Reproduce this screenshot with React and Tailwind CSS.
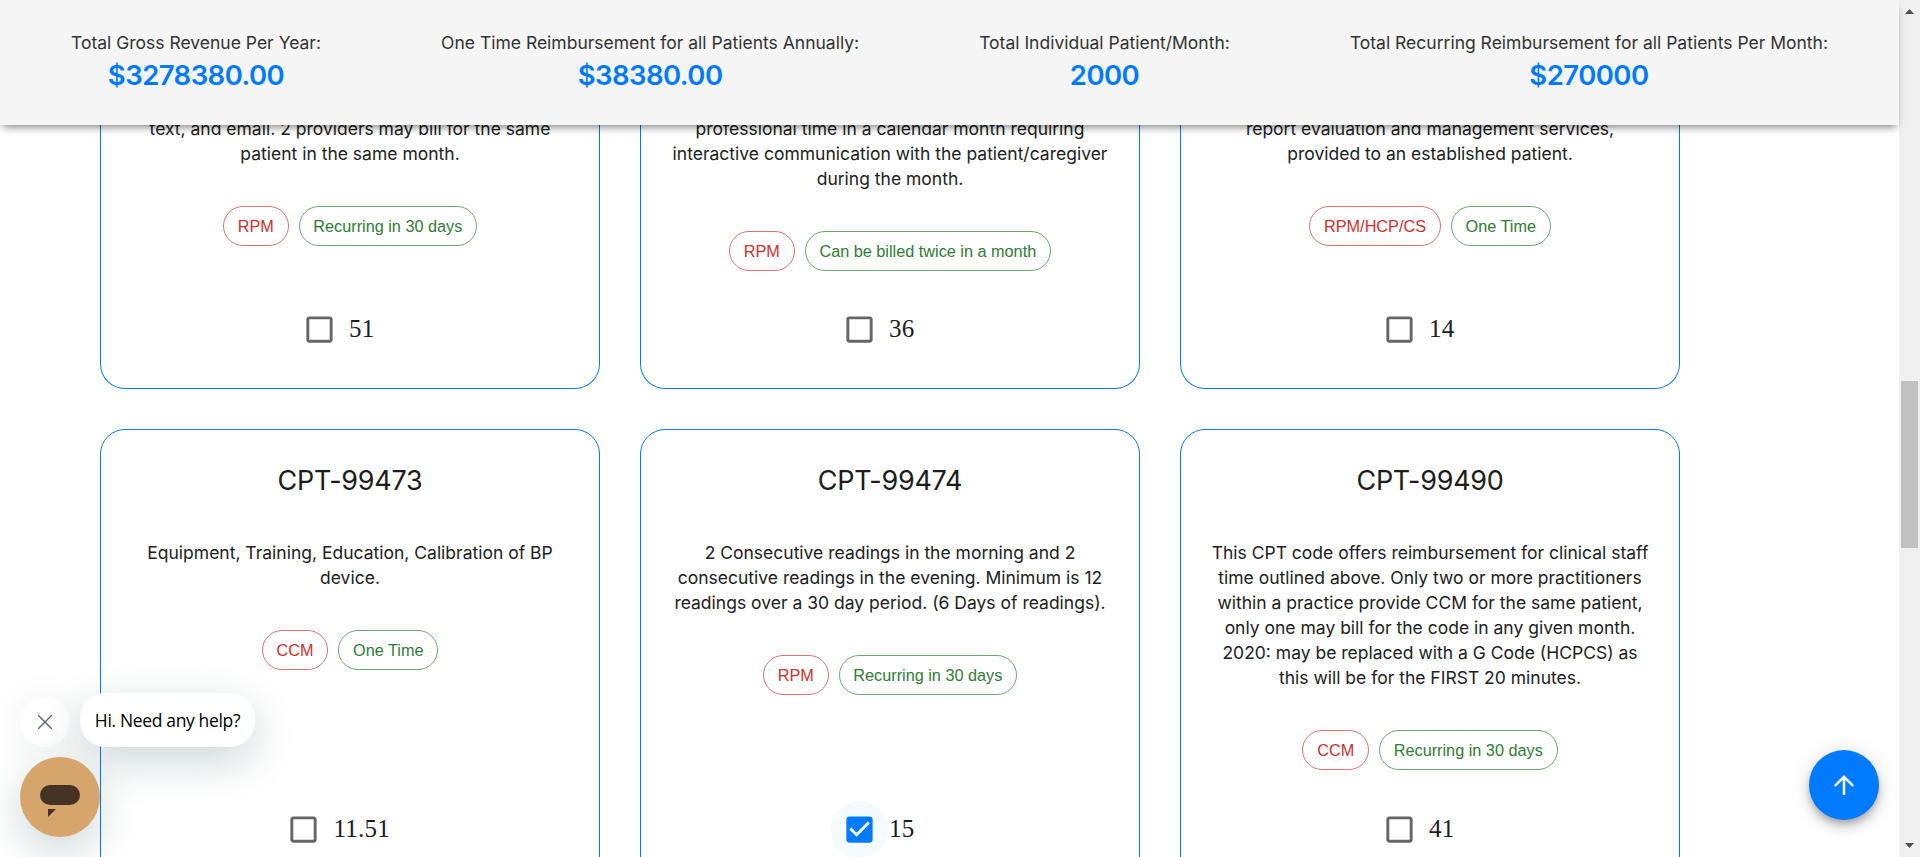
const stats = [
  { label: 'Total Gross Revenue Per Year:', value: '$3278380.00' },
  { label: 'One Time Reimbursement for all Patients Annually:', value: '$38380.00' },
  { label: 'Total Individual Patient/Month:', value: '2000' },
  { label: 'Total Recurring Reimbursement for all Patients Per Month:', value: '$270000' },
];

const upperCards = [
  {
    lines: ['text, and email. 2 providers may bill for the same', 'patient in the same month.'],
    program: 'RPM',
    billing: 'Recurring in 30 days',
    amount: '51',
  },
  {
    lines: [
      'professional time in a calendar month requiring',
      'interactive communication with the patient/caregiver',
      'during the month.',
    ],
    program: 'RPM',
    billing: 'Can be billed twice in a month',
    amount: '36',
  },
  {
    lines: ['report evaluation and management services,', 'provided to an established patient.'],
    program: 'RPM/HCP/CS',
    billing: 'One Time',
    amount: '14',
  },
];

const lowerCards = [
  {
    title: 'CPT-99473',
    lines: ['Equipment, Training, Education, Calibration of BP', 'device.'],
    program: 'CCM',
    billing: 'One Time',
    amount: '11.51',
  },
  {
    title: 'CPT-99474',
    lines: [
      '2 Consecutive readings in the morning and 2',
      'consecutive readings in the evening. Minimum is 12',
      'readings over a 30 day period. (6 Days of readings).',
    ],
    program: 'RPM',
    billing: 'Recurring in 30 days',
    amount: '15',
    checked: true,
  },
  {
    title: 'CPT-99490',
    lines: [
      'This CPT code offers reimbursement for clinical staff',
      'time outlined above. Only two or more practitioners',
      'within a practice provide CCM for the same patient,',
      'only one may bill for the code in any given month.',
      '2020: may be replaced with a G Code (HCPCS) as',
      'this will be for the FIRST 20 minutes.',
    ],
    program: 'CCM',
    billing: 'Recurring in 30 days',
    amount: '41',
  },
];

function Header() {
  return (
    <header className="relative z-10 flex h-[125px] shrink-0 justify-between bg-[#f5f5f5] px-[71px] pt-[30px] shadow-[0_5px_8px_-3px_rgba(0,0,0,0.5)]">
      {stats.map((s) => (
        <div key={s.label} className="flex flex-col items-center">
          <div className="text-[17.5px] leading-[25px] whitespace-nowrap text-[#333333]">{s.label}</div>
          <div className="text-[27.5px] leading-[40px] font-semibold tracking-[-0.55px] text-[#007bff]">{s.value}</div>
        </div>
      ))}
    </header>
  );
}

function Chip({ label, color }) {
  return (
    <span
      className={
        'flex h-10 items-center rounded-[20px] border px-[13.75px] font-["Liberation_Sans",Arial,sans-serif] text-[16.25px] whitespace-nowrap ' +
        color
      }
    >
      {label}
    </span>
  );
}

function Checkbox({ checked }) {
  return (
    <span
      className={
        '-ml-[15px] mr-px flex size-[57.5px] items-center justify-center rounded-full ' +
        (checked ? 'bg-[#f5faff] text-[#007bff]' : 'text-[#666666]')
      }
    >
      <svg className="size-[35px]" viewBox="0 0 24 24" fill="currentColor">
        {checked ? (
          <path d="M19 3H5c-1.11 0-2 .9-2 2v14c0 1.1.89 2 2 2h14c1.11 0 2-.9 2-2V5c0-1.1-.89-2-2-2zm-9 14l-5-5 1.41-1.41L10 14.17l7.59-7.59L19 8l-9 9z" />
        ) : (
          <path d="M19 5v14H5V5h14m0-2H5c-1.1 0-2 .9-2 2v14c0 1.1.9 2 2 2h14c1.1 0 2-.9 2-2V5c0-1.1-.9-2-2-2z" />
        )}
      </svg>
    </span>
  );
}

function CardBody({ card }) {
  return (
    <>
      <p className="text-center text-[17.5px] leading-[25px] whitespace-nowrap text-[#212121]">
        {card.lines.map((line) => (
          <span key={line} className="block">
            {line}
          </span>
        ))}
      </p>
      <div className="mt-10 flex gap-[10px]">
        <Chip label={card.program} color="border-[#e27272] text-[#d32f2f]" />
        <Chip label={card.billing} color="border-[#6ca770] text-[#2e7d32]" />
      </div>
      <label className="mt-auto mr-5 flex items-center text-[#1c1c1c]">
        <Checkbox checked={card.checked} />
        <span className='font-["Liberation_Serif","Times_New_Roman",serif] text-[25px] leading-[30px] tracking-[0.2px]'>
          {card.amount}
        </span>
      </label>
    </>
  );
}

function ScrollBar() {
  return (
    <aside className="flex w-[21px] shrink-0 flex-col items-center bg-[#f0f0f0]">
      <svg className="mt-[9px] h-[5px] w-[9px]" viewBox="0 0 9 5" fill="#505050">
        <path d="M4.5 0L9 5H0z" />
      </svg>
      <div className="mt-[367px] h-[167px] w-[17px] bg-[#c1c1c1]" />
      <svg className="mt-auto mb-[9px] h-[5px] w-[9px]" viewBox="0 0 9 5" fill="#505050">
        <path d="M0 0h9L4.5 5z" />
      </svg>
    </aside>
  );
}

function ChatWidget() {
  return (
    <div className="absolute top-[693px] left-5 z-20 flex flex-col gap-[10px]">
      <div className="flex items-end gap-[10px]">
        <button className="flex size-[50px] items-center justify-center rounded-full bg-white shadow-[0_5px_40px_rgba(0,50,50,0.08)]">
          <svg className="size-[14px]" viewBox="0 0 14 14" stroke="#5f6670" strokeWidth="1.4">
            <path d="M0 0L14 14M14 0L0 14" />
          </svg>
        </button>
        <div className='flex h-[54px] w-[175px] items-center justify-center rounded-[25px] bg-white font-["Open_Sans",sans-serif] text-[17.5px] tracking-[-0.35px] whitespace-nowrap text-black shadow-[0_14px_44px_rgba(0,50,50,0.2)]'>
          Hi. Need any help?
        </div>
      </div>
      <button className="flex size-20 items-center justify-center rounded-full bg-[#d6a56c] shadow-[0_14px_44px_rgba(0,50,50,0.2)]">
        <svg className="size-10" viewBox="0 0 40 40" fill="#443325">
          <rect x="0" y="8" width="40" height="20" rx="10" />
          <path d="M8 32h8l-8 8z" />
        </svg>
      </button>
    </div>
  );
}

export default function App() {
  return (
    <div className="relative flex h-[857px] w-full overflow-hidden bg-white font-[Inter,sans-serif]">
      <div className="flex min-w-0 flex-1 flex-col">
        <Header />
        <main className="min-h-0 flex-1 overflow-hidden pl-[100px]">
          <section className="-mt-5 grid grid-cols-[500px_500px_500px] gap-10">
            {upperCards.map((card) => (
              <article
                key={card.amount}
                className="flex h-[284px] flex-col items-center rounded-b-[25px] border border-t-0 border-[#007bff] pt-[11px] pb-[30px]"
              >
                <CardBody card={card} />
              </article>
            ))}
          </section>
          <section className="mt-10 grid grid-cols-[500px_500px_500px] gap-10">
            {lowerCards.map((card) => (
              <article
                key={card.title}
                className="flex h-[460px] flex-col items-center rounded-[25px] border border-[#007bff] pt-[31px] pb-[30px]"
              >
                <h2 className="mb-[39px] text-[27px] leading-10 tracking-[-0.27px] text-[#1c1c1c]">{card.title}</h2>
                <CardBody card={card} />
              </article>
            ))}
          </section>
        </main>
      </div>
      <ScrollBar />
      <ChatWidget />
      <button className="absolute top-[750px] left-[1809px] z-20 flex size-[70px] items-center justify-center rounded-full bg-[#007bff] shadow-[0_4px_6px_-1px_rgba(0,0,0,0.2),0_8px_12px_rgba(0,0,0,0.14),0_1px_22px_rgba(0,0,0,0.12)]">
        <svg className="size-[30px]" viewBox="0 0 24 24" fill="white">
          <path d="M4 12l1.41 1.41L11 7.83V20h2V7.83l5.58 5.59L20 12l-8-8-8 8z" />
        </svg>
      </button>
    </div>
  );
}
